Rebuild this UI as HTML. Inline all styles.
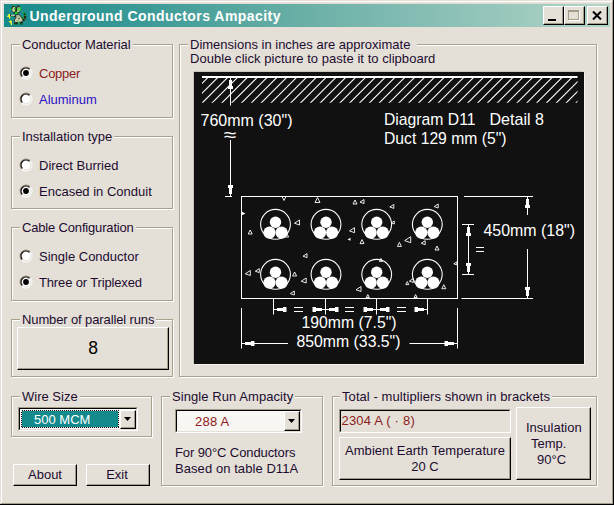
<!DOCTYPE html>
<html>
<head>
<meta charset="utf-8">
<title>Underground Conductors Ampacity</title>
<style>
html,body{margin:0;padding:0;}
body{width:614px;height:505px;overflow:hidden;background:#e4e0d8;font-family:"Liberation Sans",sans-serif;font-size:13px;color:#1d0c30;position:relative;}
#win{position:absolute;left:0;top:0;width:614px;height:505px;background:#e4e0d8;box-sizing:border-box;}
.abs{position:absolute;}
/* window frame */
#fr-r1{left:613px;top:0;width:1px;height:505px;background:#000;}
#fr-b1{left:0;top:504px;width:614px;height:1px;background:#000;}
#fr-r2{left:612px;top:1px;width:1px;height:503px;background:#a39c88;}
#fr-b2{left:1px;top:503px;width:612px;height:1px;background:#a39c88;}
#fr-l{left:1px;top:1px;width:1px;height:502px;background:#fff;}
#fr-t{left:1px;top:1px;width:611px;height:1px;background:#fff;}
/* title bar */
#title{left:4px;top:4px;width:606px;height:23px;background:linear-gradient(to right,#168b8b 0%,#3f9c98 25%,#6bb0a7 50%,#b1d4c8 100%);}
#ttext{left:25.5px;top:4px;font-weight:bold;font-size:14px;color:#fff;white-space:pre;letter-spacing:0.45px;line-height:16px;}
.tbtn{position:absolute;top:2px;width:21px;height:19px;background:#e4e0d8;box-sizing:border-box;border:1px solid;border-color:#fff #000 #000 #fff;box-shadow:inset -1px -1px 0 #a39c88;}
/* group boxes */
.grp{position:absolute;box-sizing:border-box;border:1px solid #a9a18c;box-shadow:inset 1px 1px 0 #fff, 1px 1px 0 #fff;}
.leg{position:absolute;background:#e4e0d8;white-space:pre;line-height:14px;padding:0 2px;}
.txt{position:absolute;white-space:pre;line-height:15px;}
/* radio */
.rad{position:absolute;width:12px;height:12px;border-radius:50%;background:#fff;box-sizing:border-box;border:1px solid;border-color:#8d8672 #fff #fff #8d8672;box-shadow:inset 1px 1px 0 #222,inset -1px -1px 0 #e4e0d8;}
.rad.on::after{content:"";position:absolute;left:3px;top:3px;width:4px;height:4px;border-radius:50%;background:#000;}
/* buttons */
.btn{position:absolute;box-sizing:border-box;background:#e4e0d8;border:1px solid;border-color:#fff #000 #000 #fff;box-shadow:inset -1px -1px 0 #a39c88;text-align:center;white-space:pre;}

.sunk{position:absolute;box-sizing:border-box;border:1px solid;border-color:#a39c88 #fff #fff #a39c88;}
.sunk>.in{position:absolute;left:0;top:0;right:0;bottom:0;box-sizing:border-box;border:1px solid;border-color:#000 #e4e0d8 #e4e0d8 #000;}
.dd{position:absolute;box-sizing:border-box;background:#e4e0d8;border:1px solid;border-color:#fff #000 #000 #fff;box-shadow:inset -1px -1px 0 #a39c88;}
.dd svg{position:absolute;}
</style>
</head>
<body>

<svg width="0" height="0" style="position:absolute">
 <defs>
  <g id="rad">
   <circle cx="7" cy="7" r="4.8" fill="#fff"/>
   <path d="M2.76 11.24A6 6 0 0 1 11.24 2.76" fill="none" stroke="#9a927c" stroke-width="1.1"/>
   <path d="M11.24 2.76A6 6 0 0 1 2.76 11.24" fill="none" stroke="#fff" stroke-width="1.1"/>
   <path d="M3.46 10.54A5 5 0 0 1 10.54 3.46" fill="none" stroke="#111" stroke-width="1.2"/>
   <path d="M10.54 3.46A5 5 0 0 1 3.46 10.54" fill="none" stroke="#e4e0d8" stroke-width="1"/>
  </g>
  <g id="radon"><use href="#rad"/><circle cx="7" cy="7" r="2.9" fill="#000"/></g>
 </defs>
</svg>
<div id="win">
  <div class="abs" id="fr-t"></div><div class="abs" id="fr-l"></div>
  <div class="abs" id="fr-r2"></div><div class="abs" id="fr-b2"></div>
  <div class="abs" id="fr-r1"></div><div class="abs" id="fr-b1"></div>

  <div class="abs" id="title">
    <svg class="abs" id="icon" style="left:0px;top:-1px" width="26" height="26" viewBox="0 0 505 505">
  <g>
   <!-- tail -->
   <polygon points="375,175 410,195 432,255 425,320 385,355 350,335 385,295 388,235" fill="#1c2a1c"/>
   <rect x="368" y="178" width="32" height="22" fill="#18c820"/>
   <rect x="395" y="228" width="26" height="24" fill="#18c820"/>
   <rect x="352" y="268" width="34" height="30" fill="#10a818"/>
   <rect x="392" y="300" width="26" height="30" fill="#507850"/>
   <!-- head dark base -->
   <polygon points="160,60 200,50 232,85 262,50 305,62 328,120 305,185 255,212 180,195 145,155 145,95" fill="#243024"/>
   <polygon points="170,85 205,75 225,100 215,165 175,175 158,140" fill="#c4cca4"/>
   <polygon points="250,90 300,80 315,125 295,175 255,185 245,140" fill="#c4cca4"/>
   <rect x="195" y="95" width="28" height="36" fill="#18d020"/>
   <rect x="258" y="92" width="40" height="56" fill="#18d020"/>
   <rect x="270" y="108" width="14" height="26" fill="#c4cca4"/>
   <rect x="225" y="95" width="24" height="70" fill="#182018"/>
   <rect x="212" y="172" width="44" height="40" fill="#10e018"/>
   <rect x="310" y="78" width="20" height="72" fill="#18c820"/>
   <rect x="176" y="38" width="22" height="24" fill="#18c820"/>
   <rect x="118" y="115" width="34" height="20" fill="#18c820"/>
   <rect x="262" y="45" width="30" height="18" fill="#404840"/>
   <!-- arm -->
   <rect x="118" y="218" width="20" height="34" fill="#202020"/>
   <rect x="135" y="228" width="90" height="26" fill="#b8c09c"/>
   <rect x="135" y="252" width="50" height="14" fill="#18a820"/>
   <rect x="185" y="252" width="50" height="18" fill="#282828"/>
   <!-- body -->
   <polygon points="205,222 305,222 352,285 378,340 340,378 205,385 195,325 225,285" fill="#2a342a"/>
   <polygon points="235,240 300,238 345,300 362,340 325,362 215,368 210,325 240,290" fill="#c4cca4"/>
   <rect x="280" y="288" width="28" height="20" fill="#283028"/>
   <rect x="262" y="318" width="14" height="44" fill="#8c9478"/>
   <rect x="240" y="262" width="40" height="12" fill="#8c9478"/>
   <!-- feet -->
   <rect x="195" y="378" width="72" height="38" fill="#1c241c"/>
   <rect x="315" y="372" width="48" height="44" fill="#1c241c"/>
   <rect x="200" y="402" width="36" height="18" fill="#109818"/>
   <rect x="268" y="368" width="34" height="26" fill="#18c020"/>
   <rect x="325" y="398" width="40" height="22" fill="#108018"/>
   <!-- lightning -->
   <polygon points="84,214 116,214 121,306 99,306 95,272 58,268 58,250 84,246" fill="#ffff28"/>
   <polygon points="119,334 136,334 151,360 156,426 134,426 125,386 94,366 94,350 119,350" fill="#ffff28"/>
  </g>
 </svg>
    <div class="abs" id="ttext">Underground Conductors Ampacity</div>
    <div class="tbtn" style="left:539px"><div class="abs" style="left:4px;top:12px;width:8px;height:2px;background:#000"></div></div>
    <div class="tbtn" style="left:560px"><div class="abs" style="left:3px;top:3px;width:11px;height:10px;box-sizing:border-box;border:1px solid #a39c88;border-top-width:2px;box-shadow:1px 1px 0 #fff"></div></div>
    <div class="tbtn" style="left:583px">
      <svg class="abs" style="left:4px;top:4px" width="10" height="9" viewBox="0 0 10 9"><path d="M1 0.5 L9 8.5 M9 0.5 L1 8.5" stroke="#000" stroke-width="2" fill="none"/></svg>
    </div>
  </div>

  <!-- Conductor Material -->
  <div class="grp" style="left:11px;top:44px;width:162px;height:74px"></div>
  <div class="leg" style="left:20px;top:38px;letter-spacing:-0.07px">Conductor Material</div>
  <svg class="abs" style="left:19.1px;top:66.0px" width="14" height="14"><use href="#radon"/></svg>
  <div class="txt" style="left:39px;top:66px;color:#8c1c20;letter-spacing:-0.25px">Copper</div>
  <svg class="abs" style="left:19.1px;top:92.0px" width="14" height="14"><use href="#rad"/></svg>
  <div class="txt" style="left:39px;top:92px;color:#2a12c4">Aluminum</div>

  <!-- Installation type -->
  <div class="grp" style="left:11px;top:136px;width:162px;height:73px"></div>
  <div class="leg" style="left:20px;top:130px">Installation type</div>
  <svg class="abs" style="left:19.1px;top:158.0px" width="14" height="14"><use href="#rad"/></svg>
  <div class="txt" style="left:39px;top:158px">Direct Burried</div>
  <svg class="abs" style="left:19.1px;top:184.0px" width="14" height="14"><use href="#radon"/></svg>
  <div class="txt" style="left:39px;top:184px">Encased in Conduit</div>

  <!-- Cable Configuration -->
  <div class="grp" style="left:11px;top:227px;width:162px;height:74px"></div>
  <div class="leg" style="left:20px;top:221px;letter-spacing:-0.17px">Cable Configuration</div>
  <svg class="abs" style="left:19.1px;top:249.0px" width="14" height="14"><use href="#rad"/></svg>
  <div class="txt" style="left:39px;top:249px">Single Conductor</div>
  <svg class="abs" style="left:19.1px;top:275.0px" width="14" height="14"><use href="#radon"/></svg>
  <div class="txt" style="left:39px;top:275px;letter-spacing:-0.15px">Three or Triplexed</div>

  <!-- Number of parallel runs -->
  <div class="grp" style="left:11px;top:319px;width:162px;height:58px"></div>
  <div class="leg" style="left:20px;top:313px;letter-spacing:-0.12px">Number of parallel runs</div>
  <div class="btn" style="left:17px;top:327px;width:152px;height:43px;font-size:17.5px;line-height:40px;color:#000">8</div>

  <!-- Picture group -->
  <div class="grp" style="left:179px;top:44px;width:418px;height:333px"></div>
  <div class="leg" style="left:188px;top:39px;width:225px;height:12px;line-height:12px">Dimensions in inches are approximate</div>
  <div class="txt" style="left:190px;top:50.5px;letter-spacing:0.04px">Double click picture to paste it to clipboard</div>
  <div class="abs" id="pic" style="left:194px;top:72px;width:390px;height:292px;background:#111;box-shadow:1px 1px 0 #f6f4f0,-1px -1px 0 #cdc6b6"></div>

  <!-- Wire size -->
  <div class="grp" style="left:11px;top:396px;width:141px;height:41px"></div>
  <div class="leg" style="left:20px;top:390px">Wire Size</div>

  <!-- Single run ampacity -->
  <div class="grp" style="left:161px;top:396px;width:162px;height:90px"></div>
  <div class="leg" style="left:170px;top:390px;letter-spacing:0.07px">Single Run Ampacity</div>
  <div class="txt" style="left:175px;top:445px;line-height:16px"><span style="letter-spacing:-0.1px">For 90°C Conductors</span><br><span style="letter-spacing:0.07px">Based on table D11A</span></div>

  <!-- Total -->
  <div class="grp" style="left:332px;top:396px;width:265px;height:90px"></div>
  <div class="leg" style="left:340px;top:390px;letter-spacing:0.075px">Total - multipliers shown in brackets</div>

  <div class="btn" style="left:13px;top:464px;width:64px;height:22px;line-height:19px">About</div>
  <div class="btn" style="left:86px;top:464px;width:64px;height:22px;line-height:19px;padding-right:2px">Exit</div>
  <div class="btn" style="left:339px;top:437px;width:172px;height:43px;line-height:16px;padding-top:5px"><span style="letter-spacing:0.05px">Ambient Earth Temperature</span><br>20 C</div>
  <div class="btn" style="left:516px;top:407px;width:75px;height:73px"></div>
  <div class="txt" style="left:526px;top:420px;line-height:16px">Insulation</div>
  <div class="txt" style="left:531px;top:436px;line-height:16px">Temp.</div>
  <div class="txt" style="left:537px;top:452px;line-height:16px">90°C</div>

  <!-- combos -->
  <div class="sunk" style="left:18px;top:407px;width:120px;height:24px"><div class="in" style="background:#fff"></div></div>
  <div class="abs" style="left:21px;top:410px;width:98px;height:18px;background:#158a8c;"></div>
  <svg class="abs" style="left:21px;top:410px" width="98" height="18" shape-rendering="crispEdges"><rect x="0.5" y="0.5" width="97" height="17" fill="none" stroke="#f4e4e4" stroke-width="1"/><rect x="0.5" y="0.5" width="97" height="17" fill="none" stroke="#101010" stroke-width="1" stroke-dasharray="1 1"/></svg>
  <div class="txt" style="left:34px;top:411.5px;color:#fff">500 MCM</div>
  <div class="dd" style="left:120px;top:410px;width:16px;height:19px"><svg style="left:3px;top:6px" width="7" height="4" viewBox="0 0 7 4"><path d="M0 0H7L3.5 4Z" fill="#000"/></svg></div>

  <div class="sunk" style="left:175px;top:409px;width:127px;height:24px"><div class="in" style="background:#f9f7f3"></div></div>
  <div class="txt" style="left:195px;top:414px;color:#8c1c20;letter-spacing:0.25px">288 A</div>
  <div class="dd" style="left:284px;top:411px;width:16px;height:20px"><svg style="left:3px;top:7px" width="7" height="4" viewBox="0 0 7 4"><path d="M0 0H7L3.5 4Z" fill="#000"/></svg></div>

  <div class="sunk" style="left:339px;top:409px;width:172px;height:24px"><div class="in"></div></div>
  <div class="txt" style="left:341.5px;top:413px;color:#8c1c20;letter-spacing:0.2px">2304 A ( · 8)</div>
<!--SVGSTART--><svg class="abs" style="left:194px;top:72px" width="390" height="292" viewBox="194 72 390 292" font-family="Liberation Sans, sans-serif" font-size="16.6" fill="#fff">
<defs><clipPath id="hc"><rect x="202" y="78" width="375.5" height="24.8"/></clipPath></defs>
<rect x="202" y="76" width="375.5" height="2" fill="#fff"/>
<path clip-path="url(#hc)" d="M172.09 103.5L200.09 75.5M181.93 103.5L209.93 75.5M191.76 103.5L219.76 75.5M201.60 103.5L229.60 75.5M211.44 103.5L239.44 75.5M221.27 103.5L249.27 75.5M231.11 103.5L259.11 75.5M240.95 103.5L268.95 75.5M250.78 103.5L278.78 75.5M260.62 103.5L288.62 75.5M270.46 103.5L298.46 75.5M280.30 103.5L308.30 75.5M290.13 103.5L318.13 75.5M299.97 103.5L327.97 75.5M309.81 103.5L337.81 75.5M319.64 103.5L347.64 75.5M329.48 103.5L357.48 75.5M339.32 103.5L367.32 75.5M349.15 103.5L377.15 75.5M358.99 103.5L386.99 75.5M368.83 103.5L396.83 75.5M378.67 103.5L406.67 75.5M388.50 103.5L416.50 75.5M398.34 103.5L426.34 75.5M408.18 103.5L436.18 75.5M418.01 103.5L446.01 75.5M427.85 103.5L455.85 75.5M437.69 103.5L465.69 75.5M447.52 103.5L475.52 75.5M457.36 103.5L485.36 75.5M467.20 103.5L495.20 75.5M477.04 103.5L505.04 75.5M486.87 103.5L514.87 75.5M496.71 103.5L524.71 75.5M506.55 103.5L534.55 75.5M516.38 103.5L544.38 75.5M526.22 103.5L554.22 75.5M536.06 103.5L564.06 75.5M545.89 103.5L573.89 75.5M555.73 103.5L583.73 75.5M565.57 103.5L593.57 75.5M575.41 103.5L603.41 75.5" stroke="#fff" stroke-width="1.1" fill="none"/>
<rect x="230.0" y="78" width="1" height="27.5"/>
<rect x="230.0" y="78" width="1.0" height="2"/><rect x="229.0" y="80" width="3.0" height="6"/><rect x="228.0" y="86" width="5.0" height="3"/>
<text x="200.5" y="126" textLength="92.0" lengthAdjust="spacingAndGlyphs">760mm (30&quot;)</text>
<text x="224" y="141" font-size="18" textLength="12.5" lengthAdjust="spacingAndGlyphs">≈</text>
<rect x="230.0" y="140" width="1" height="56"/>
<rect x="230.0" y="194" width="1.0" height="2"/><rect x="229.0" y="188" width="3.0" height="6"/><rect x="228.0" y="185" width="5.0" height="3"/>
<rect x="225" y="196.0" width="7" height="1"/>
<text x="384.0" y="125" textLength="91.5" lengthAdjust="spacingAndGlyphs">Diagram D11</text>
<text x="489.5" y="125" textLength="54.5" lengthAdjust="spacingAndGlyphs">Detail 8</text>
<text x="384.0" y="144" textLength="122.5" lengthAdjust="spacingAndGlyphs">Duct 129 mm (5&quot;)</text>
<rect x="241.5" y="196.5" width="216" height="102" fill="none" stroke="#fff" stroke-width="1"/>
<circle cx="275.5" cy="224.3" r="14.9" fill="none" stroke="#fff" stroke-width="1.1"/>
<circle cx="275.5" cy="222.20000000000002" r="5.7"/>
<circle cx="269.5" cy="232.60000000000002" r="6.1"/>
<circle cx="281.6" cy="232.60000000000002" r="6.1"/>
<circle cx="326" cy="224.3" r="14.9" fill="none" stroke="#fff" stroke-width="1.1"/>
<circle cx="326" cy="222.20000000000002" r="5.7"/>
<circle cx="320" cy="232.60000000000002" r="6.1"/>
<circle cx="332.1" cy="232.60000000000002" r="6.1"/>
<circle cx="376.7" cy="224.3" r="14.9" fill="none" stroke="#fff" stroke-width="1.1"/>
<circle cx="376.7" cy="222.20000000000002" r="5.7"/>
<circle cx="370.7" cy="232.60000000000002" r="6.1"/>
<circle cx="382.8" cy="232.60000000000002" r="6.1"/>
<circle cx="427.3" cy="224.3" r="14.9" fill="none" stroke="#fff" stroke-width="1.1"/>
<circle cx="427.3" cy="222.20000000000002" r="5.7"/>
<circle cx="421.3" cy="232.60000000000002" r="6.1"/>
<circle cx="433.40000000000003" cy="232.60000000000002" r="6.1"/>
<circle cx="275.5" cy="274.3" r="14.9" fill="none" stroke="#fff" stroke-width="1.1"/>
<circle cx="275.5" cy="272.2" r="5.7"/>
<circle cx="269.5" cy="282.6" r="6.1"/>
<circle cx="281.6" cy="282.6" r="6.1"/>
<circle cx="326" cy="274.3" r="14.9" fill="none" stroke="#fff" stroke-width="1.1"/>
<circle cx="326" cy="272.2" r="5.7"/>
<circle cx="320" cy="282.6" r="6.1"/>
<circle cx="332.1" cy="282.6" r="6.1"/>
<circle cx="376.7" cy="274.3" r="14.9" fill="none" stroke="#fff" stroke-width="1.1"/>
<circle cx="376.7" cy="272.2" r="5.7"/>
<circle cx="370.7" cy="282.6" r="6.1"/>
<circle cx="382.8" cy="282.6" r="6.1"/>
<circle cx="427.3" cy="274.3" r="14.9" fill="none" stroke="#fff" stroke-width="1.1"/>
<circle cx="427.3" cy="272.2" r="5.7"/>
<circle cx="421.3" cy="282.6" r="6.1"/>
<circle cx="433.40000000000003" cy="282.6" r="6.1"/>
<rect x="464" y="196.0" width="69" height="1"/>
<rect x="461.5" y="298.0" width="71.5" height="1"/>
<rect x="527.0" y="196" width="1" height="19"/>
<rect x="527.0" y="197" width="1.0" height="2"/><rect x="526.0" y="199" width="3.0" height="6"/><rect x="525.0" y="205" width="5.0" height="3"/>
<rect x="527.0" y="249" width="1" height="49"/>
<rect x="527.0" y="296" width="1.0" height="2"/><rect x="526.0" y="290" width="3.0" height="6"/><rect x="525.0" y="287" width="5.0" height="3"/>
<rect x="462" y="224.0" width="12" height="1"/>
<rect x="462" y="274.0" width="12" height="1"/>
<rect x="468.0" y="224" width="1" height="50"/>
<rect x="468.0" y="225" width="1.0" height="2"/><rect x="467.0" y="227" width="3.0" height="6"/><rect x="466.0" y="233" width="5.0" height="3"/>
<rect x="468.0" y="272" width="1.0" height="2"/><rect x="467.0" y="266" width="3.0" height="6"/><rect x="466.0" y="263" width="5.0" height="3"/>
<rect x="476" y="247" width="8" height="1"/><rect x="476" y="251" width="8" height="1"/>
<text x="483.5" y="236" textLength="91.5" lengthAdjust="spacingAndGlyphs">450mm (18&quot;)</text>
<rect x="273.0" y="298" width="1" height="16.5"/>
<rect x="325.0" y="298" width="1" height="16.5"/>
<rect x="376.0" y="298" width="1" height="16.5"/>
<rect x="427.0" y="298" width="1" height="16.5"/>
<rect x="274.0" y="309.0" width="3" height="1.0"/><rect x="277.0" y="308.0" width="6" height="3.0"/><rect x="283.0" y="307.0" width="3.5" height="5.0"/>
<rect x="322.0" y="309.0" width="3" height="1.0"/><rect x="316.0" y="308.0" width="6" height="3.0"/><rect x="312.5" y="307.0" width="3.5" height="5.0"/>
<rect x="326.0" y="309.0" width="3" height="1.0"/><rect x="329.0" y="308.0" width="6" height="3.0"/><rect x="335.0" y="307.0" width="3.5" height="5.0"/>
<rect x="373.0" y="309.0" width="3" height="1.0"/><rect x="367.0" y="308.0" width="6" height="3.0"/><rect x="363.5" y="307.0" width="3.5" height="5.0"/>
<rect x="377.0" y="309.0" width="3" height="1.0"/><rect x="380.0" y="308.0" width="6" height="3.0"/><rect x="386.0" y="307.0" width="3.5" height="5.0"/>
<rect x="424.0" y="309.0" width="3" height="1.0"/><rect x="418.0" y="308.0" width="6" height="3.0"/><rect x="414.5" y="307.0" width="3.5" height="5.0"/>
<rect x="294" y="307" width="9" height="1"/><rect x="294" y="311" width="9" height="1"/>
<rect x="345" y="307" width="9" height="1"/><rect x="345" y="311" width="9" height="1"/>
<rect x="397" y="307" width="9" height="1"/><rect x="397" y="311" width="9" height="1"/>
<text x="301.5" y="328" textLength="95.0" lengthAdjust="spacingAndGlyphs">190mm (7.5&quot;)</text>
<text x="296.5" y="347" textLength="104.0" lengthAdjust="spacingAndGlyphs">850mm (33.5&quot;)</text>
<rect x="241.0" y="308" width="1" height="40.5"/>
<rect x="457.0" y="308" width="1" height="40.5"/>
<rect x="242" y="343.0" width="46" height="1"/>
<rect x="242" y="343.0" width="3" height="1.0"/><rect x="245" y="342.0" width="6" height="3.0"/><rect x="251" y="341.0" width="3.5" height="5.0"/>
<rect x="409.5" y="343.0" width="47.5" height="1"/>
<rect x="454" y="343.0" width="3" height="1.0"/><rect x="448" y="342.0" width="6" height="3.0"/><rect x="444.5" y="341.0" width="3.5" height="5.0"/>
<polygon points="284.0,200.5 286.0,196.5 282.0,196.5" fill="none" stroke="#fff" stroke-width="0.9"/>
<polygon points="317.5,197.5 320.0,202.5 315.0,202.5" fill="none" stroke="#fff" stroke-width="0.9"/>
<polygon points="355.0,200.0 357.0,204.0 353.0,204.0" fill="none" stroke="#fff" stroke-width="0.9"/>
<polygon points="360.0,202.1 364.0,199.5 364.0,203.5" fill="none" stroke="#fff" stroke-width="0.9"/>
<polygon points="294.5,223.2 299.5,220.0 299.5,225.0" fill="none" stroke="#fff" stroke-width="0.9"/>
<polygon points="250.2,230.0 252.2,234.0 248.2,234.0" fill="none" stroke="#fff" stroke-width="0.9"/>
<polygon points="286.6,233.0 288.6,237.0 284.6,237.0" fill="none" stroke="#fff" stroke-width="0.9"/>
<polygon points="349.5,230.9 354.5,227.7 354.5,232.7" fill="none" stroke="#fff" stroke-width="0.9"/>
<polygon points="303.0,256.2 307.0,253.6 307.0,257.6" fill="none" stroke="#fff" stroke-width="0.9"/>
<polygon points="245.3,273.8 250.3,270.5 250.3,275.5" fill="none" stroke="#fff" stroke-width="0.9"/>
<polygon points="255.3,271.2 259.3,268.6 259.3,272.6" fill="none" stroke="#fff" stroke-width="0.9"/>
<polygon points="294.6,272.0 296.6,276.0 292.6,276.0" fill="none" stroke="#fff" stroke-width="0.9"/>
<polygon points="301.2,281.2 306.2,278.0 306.2,283.0" fill="none" stroke="#fff" stroke-width="0.9"/>
<polygon points="290.3,293.6 294.3,291.0 294.3,295.0" fill="none" stroke="#fff" stroke-width="0.9"/>
<polygon points="356.0,289.8 361.0,286.5 361.0,291.5" fill="none" stroke="#fff" stroke-width="0.9"/>
<polygon points="389.8,207.0 393.8,204.4 393.8,208.4" fill="none" stroke="#fff" stroke-width="0.9"/>
<polygon points="434.2,206.6 438.2,204.0 438.2,208.0" fill="none" stroke="#fff" stroke-width="0.9"/>
<polygon points="362.0,239.6 364.0,243.6 360.0,243.6" fill="none" stroke="#fff" stroke-width="0.9"/>
<polygon points="391.3,222.9 394.3,221.0 394.3,224.0" fill="none" stroke="#fff" stroke-width="0.9"/>
<polygon points="404.7,240.6 410.7,236.7 410.7,242.7" fill="none" stroke="#fff" stroke-width="0.9"/>
<polygon points="399.4,242.4 401.4,246.4 397.4,246.4" fill="none" stroke="#fff" stroke-width="0.9"/>
<polygon points="421.2,243.3 425.2,240.7 425.2,244.7" fill="none" stroke="#fff" stroke-width="0.9"/>
<polygon points="437.0,246.0 439.0,250.0 435.0,250.0" fill="none" stroke="#fff" stroke-width="0.9"/>
<polygon points="453.8,263.8 456.8,261.9 456.8,264.9" fill="none" stroke="#fff" stroke-width="0.9"/>
<polygon points="380.9,258.4 382.4,261.4 379.4,261.4" fill="none" stroke="#fff" stroke-width="0.9"/>
<polygon points="409.3,281.1 413.3,278.5 413.3,282.5" fill="none" stroke="#fff" stroke-width="0.9"/>
<polygon points="407.3,281.6 408.8,284.6 405.8,284.6" fill="none" stroke="#fff" stroke-width="0.9"/>
<polygon points="443.8,284.7 445.8,288.7 441.8,288.7" fill="none" stroke="#fff" stroke-width="0.9"/>
<polygon points="367.8,294.5 369.3,297.5 366.3,297.5" fill="none" stroke="#fff" stroke-width="0.9"/>
<polygon points="415.6,294.5 417.1,297.5 414.1,297.5" fill="none" stroke="#fff" stroke-width="0.9"/>
<polygon points="245.5,213.5 241.5,211.5 241.5,215.5" fill="#fff"/>
<polygon points="347.5,239.6 350.5,237.7 350.5,240.7" fill="#fff"/>
</svg><!--SVGEND-->
</div>
</body>
</html>
